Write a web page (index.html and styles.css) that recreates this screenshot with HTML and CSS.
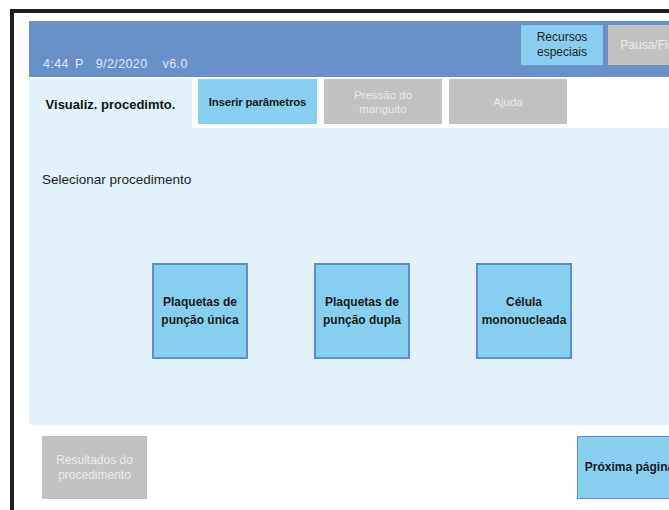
FILE: index.html
```html
<!DOCTYPE html>
<html lang="pt">
<head>
    <link rel="stylesheet" href="styles.css">
    <meta charset="UTF-8">
    <meta name="viewport" content="width=device-width, initial-scale=1.0">
    <title>Visualiz. procedimto.</title>
</head>
<body>
    <div class="frame">
        <div class="header">
            <div class="status">
                <span>4:44</span><span>P</span><span class="date">9/2/2020</span><span class="ver">v6.0</span>
            </div>
            <div class="header-buttons">
                <button class="btn btn-blue top-btn">Recursos<br>especiais</button>
                <button class="btn btn-gray top-btn">Pausa/Fim</button>
            </div>
        </div>

        <div class="tabs">
            <div class="tab active">Visualiz. procedimto.</div>
            <div class="tab tab-blue">Inserir parâmetros</div>
            <div class="tab tab-gray">Pressão do<br>manguito</div>
            <div class="tab tab-gray">Ajuda</div>
        </div>

        <div class="panel">
            <p class="prompt">Selecionar procedimento</p>
            <div class="cards">
                <button class="card">Plaquetas de<br>punção única</button>
                <button class="card">Plaquetas de<br>punção dupla</button>
                <button class="card">Célula<br>mononucleada</button>
            </div>
        </div>

        <div class="footer">
            <button class="btn btn-gray foot-btn">Resultados do<br>procedimento</button>
            <button class="btn btn-next foot-btn">Próxima página</button>
        </div>
    </div>
</body>
</html>
```

FILE: styles.css
```css
body {
    margin: 0;
    background-color: #ffffff;
    font-family: "Liberation Sans", Arial, sans-serif;
    overflow: hidden;
    height: 510px;
}

.frame {
    margin: 9px 0 0 10px;
    width: 720px;
    height: 520px;
    border-left: 4px solid #1f1f1f;
    border-top: 4px solid #1f1f1f;
    padding: 8px 0 0 15px;
    box-sizing: border-box;
    display: flex;
    flex-direction: column;
}

.btn {
    border: none;
    font-family: inherit;
    font-size: 12px;
    line-height: 15px;
    padding: 0;
    cursor: pointer;
}

.btn-blue {
    background-color: #88cdee;
    color: #1d1d1d;
}

.btn-gray {
    background-color: #c2c2c2;
    color: #ececec;
}

.header {
    height: 56px;
    background-color: #6990c9;
    display: flex;
    justify-content: space-between;
    align-items: flex-start;
}

.status {
    margin: 36px 0 0 14px;
    color: #e3eaf6;
    font-size: 12.5px;
    letter-spacing: 0.4px;
    display: flex;
    gap: 6px;
}

.status .date {
    margin-left: 6px;
}

.status .ver {
    margin-left: 9px;
}

.header-buttons {
    display: flex;
    gap: 5px;
    margin: 4px 40px 0 0;
}

.top-btn {
    width: 82px;
    height: 40px;
}

.tabs {
    display: flex;
    align-items: flex-start;
    margin-top: 1px;
}

.tab {
    height: 45px;
    width: 118px;
    margin-top: 1px;
    margin-left: 7px;
    display: flex;
    align-items: center;
    justify-content: center;
    text-align: center;
    font-size: 11.5px;
    line-height: 14px;
}

.tab.active {
    width: 163px;
    height: 50px;
    margin: 0;
    background-color: #e3f1fa;
    color: #111111;
    font-size: 13px;
    font-weight: bold;
    padding-top: 4px;
    box-sizing: border-box;
}

.tab-blue {
    margin-left: 6px;
    width: 119px;
    background-color: #88cfef;
    color: #1d1d1d;
    font-weight: bold;
    letter-spacing: -0.2px;
}

.tab-gray {
    background-color: #c2c2c2;
    color: #e9e9e9;
}

.panel {
    height: 297px;
    background-color: #e3f1fa;
    border-bottom-left-radius: 4px;
}

.prompt {
    margin: 44px 0 0 13px;
    font-size: 13.5px;
    color: #1d1d1d;
}

.cards {
    display: flex;
    gap: 66px;
    margin: 76px 0 0 123px;
}

.card {
    width: 96px;
    height: 96px;
    background-color: #87cfef;
    border: 2px solid #5d8bcc;
    font-family: inherit;
    font-size: 12px;
    font-weight: bold;
    line-height: 18px;
    color: #1a1a1a;
    padding: 0;
    cursor: pointer;
}

.footer {
    display: flex;
    justify-content: space-between;
    margin-top: 11px;
    padding-left: 13px;
    width: 640px;
}

.foot-btn {
    width: 105px;
    height: 63px;
}

.btn-next {
    background-color: #88cfef;
    border: 1.5px solid #5d8bcc;
    color: #1a1a1a;
    font-weight: bold;
}
```
